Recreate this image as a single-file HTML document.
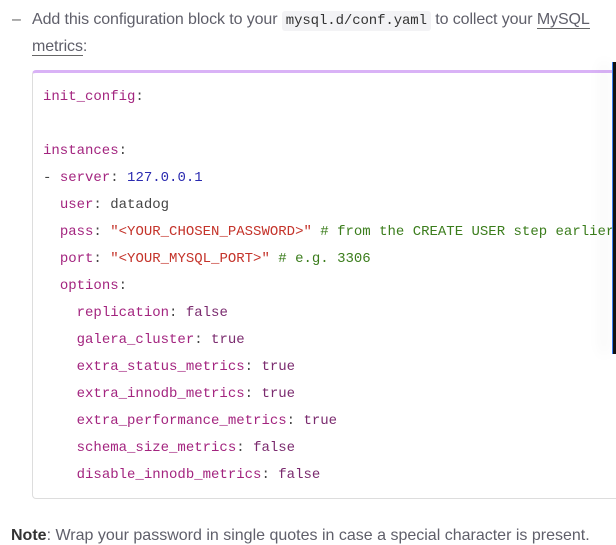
<!DOCTYPE html>
<html><head><style>
body{margin:0;width:616px;height:537px;overflow:hidden;background:#fff;font-family:"Liberation Sans",sans-serif;position:relative}
.p{position:absolute;left:32px;top:7px;width:575px;font-size:16px;line-height:26px;color:#5f5f6a;letter-spacing:-0.1px}
.dash{position:absolute;left:12px;top:7px;font-size:16px;line-height:26px;color:#666}
code{font-family:"Liberation Mono",monospace;font-size:14px;background:#f3f3f5;color:#333;padding:2px 4px;border-radius:3px}
a{color:#5f5f6a;text-decoration:none;border-bottom:1px solid #666}
.box{position:absolute;left:32px;top:70px;width:620px;height:425px;border:1px solid #ddd;border-top:3px solid #d9b2f6;border-radius:4px}
pre{position:absolute;left:43px;top:84px;margin:0;font-family:"Liberation Mono",monospace;font-size:14px;line-height:27px;color:#444}
.k{color:#a3247f}.n{color:#2a2ab0}.s{color:#c4332a}.c{color:#3b7d1c}.b{color:#7a2a6e}
.bar{position:absolute;left:612px;top:62px;width:3px;height:292px;background:#111;border-left:1px solid #3a7ef0;box-shadow:-10px 0 14px rgba(0,0,0,0.08)}
.note{position:absolute;left:11px;top:527px;font-size:16px;color:#5f5f6a}
</style></head><body>
<div class="dash">–</div>
<div class="p">Add this configuration block to your <code>mysql.d/conf.yaml</code> to collect your <a>MySQL</a><br><a>metrics</a>:</div>
<div class="box"></div>
<pre><span class="k">init_config</span>:

<span class="k">instances</span>:
- <span class="k">server</span>: <span class="n">127.0.0.1</span>
  <span class="k">user</span>: datadog
  <span class="k">pass</span>: <span class="s">"&lt;YOUR_CHOSEN_PASSWORD&gt;"</span> <span class="c"># from the CREATE USER step earlier</span>
  <span class="k">port</span>: <span class="s">"&lt;YOUR_MYSQL_PORT&gt;"</span> <span class="c"># e.g. 3306</span>
  <span class="k">options</span>:
    <span class="k">replication</span>: <span class="b">false</span>
    <span class="k">galera_cluster</span>: <span class="b">true</span>
    <span class="k">extra_status_metrics</span>: <span class="b">true</span>
    <span class="k">extra_innodb_metrics</span>: <span class="b">true</span>
    <span class="k">extra_performance_metrics</span>: <span class="b">true</span>
    <span class="k">schema_size_metrics</span>: <span class="b">false</span>
    <span class="k">disable_innodb_metrics</span>: <span class="b">false</span></pre>
<div class="bar"></div>
<div class="note"><b style="color:#333">Note</b>: Wrap your password in single quotes in case a special character is present.</div>
</body></html>
